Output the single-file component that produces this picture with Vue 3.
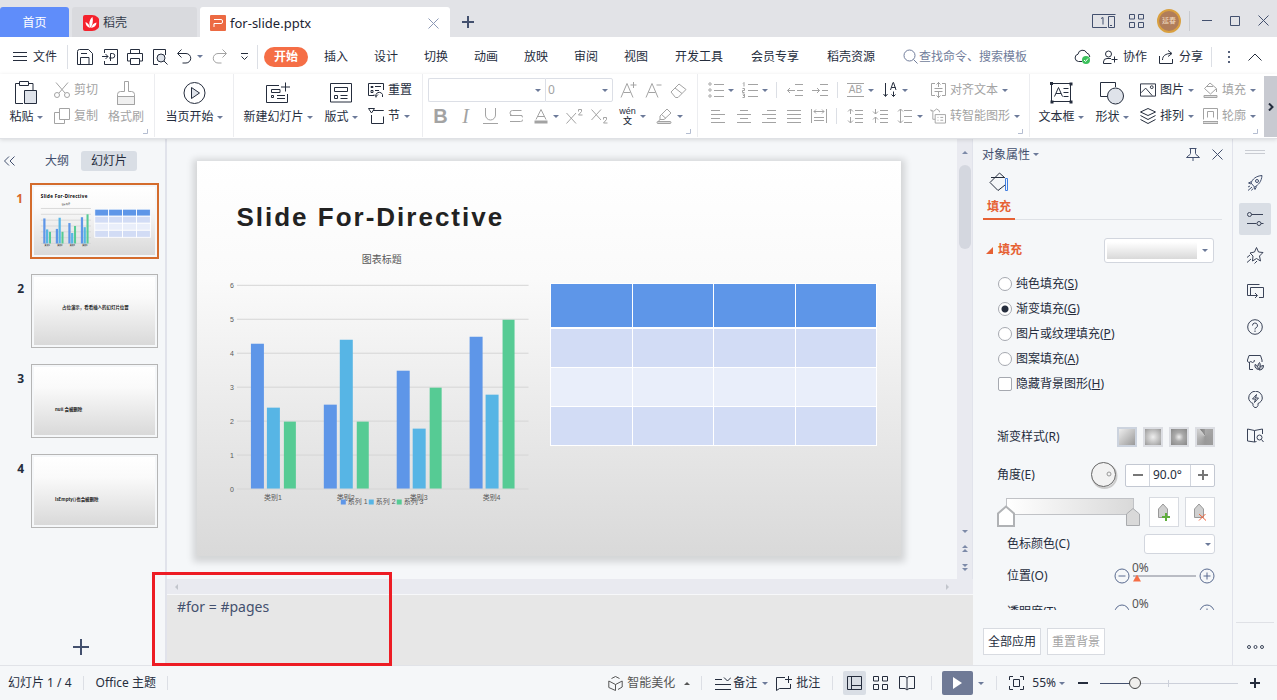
<script setup>
import { ref, h } from 'vue'

const glyphs = {
  save: [16, 16, '<path d="M.5 15.5V2.5a2 2 0 0 1 2-2h9l4 4v11z"/><path d="M3.500 15V8.500h8.500V15M4 4.500h6"/>'],
  exportPdf: [16, 16, '<path d="M2.500 4V.5h13v15h-13V12M0 7.500h6M3.500 5l2.500 2.500L3.500 10"/><path d="M8.500 12V4.500h2a2.200 2.200 0 0 1 0 4.500h-3.500"/>'],
  print: [16, 16, '<path d="M3.500 4V.5h9V4M3.500 12h-3V4.500h15V12h-3"/><path d="M3.500 9.500h9v6h-9z"/>'],
  preview: [16, 16, '<path d="M6 15.500H1.500V.5h12V6"/><circle cx="9" cy="9" r="4" fill="#dfe3ea"/><path d="M12 12l3.500 3.500"/>'],
  undo: [15, 15, '<path d="M4.500.5l-4 4 4 4M1 4.500h8a4.500 4.500 0 0 1 0 9.500H5.500"/>'],
  redo: [15, 15, '<path d="M10.500.5l4 4-4 4M14 4.500H6a4.500 4.500 0 0 0 0 9.500h3.500"/>'],
  more: [9, 8, '<path d="M1 .5h7M1.500 3.500l3 3 3-3"/>'],
  menu: [14, 9, '<path d="M0 .5h14M0 4.500h14M0 8.500h14"/>'],
  search: [15, 15, '<circle cx="6.500" cy="6.500" r="5.500"/><path d="M10.500 10.500l4 4"/>'],
  cloud: [17, 16, '<path d="M8 12.500H4.500a3.700 3.700 0 0 1-.5-7.300A4.600 4.600 0 0 1 12.800 4a4.300 4.300 0 0 1 3 4"/><circle cx="12" cy="11" r="4" fill="#3cc15c" stroke="none"/><path d="M10 11l1.500 1.500L14 9.500" stroke="#fff"/>'],
  person: [15, 14, '<circle cx="5.500" cy="4" r="3"/><path d="M8 8.500H4A3.500 3.500 0 0 0 .5 12v1.500h8M11.500 6.500v6M8.500 9.500h6"/>'],
  share: [15, 14, '<path d="M.5 6v7.500h13V9M3.500 10c0-4 3-6.500 8.500-6.500M9 .5l4 3-4 3"/>'],
  chevUp: [14, 8, '<path d="M.5 7.500l6.500-6.500 6.500 6.500"/>'],
  paste: [22, 24, '<path d="M8 22.500H.5v-20H4M14 2.500h4V9M4.500.5h9v4h-9z"/><path d="M9.500 9.500h12v13h-12z" fill="#dfe3ea"/>'],
  cut: [16, 16, '<circle cx="3" cy="13" r="2.500"/><circle cx="13" cy="13" r="2.500"/><path d="M5 11L14 .5M11 11L2 .5"/>'],
  copy: [16, 16, '<path d="M5.500.5h10v11h-10z"/><path d="M5.500 4.500h-5v11h10v-4"/>'],
  brush: [18, 24, '<path d="M7.500 10.500V.5h4v10h3a3 3 0 0 1 3 3v10H.5v-10a3 3 0 0 1 3-3z"/><path d="M.5 15.500h17v8H.5z" fill="#f0f0f0"/>'],
  playRound: [23, 24, '<circle cx="11.500" cy="12" r="10.500"/><path d="M8.500 6.500l8 5.500-8 5.500z" fill="#dfe3ea"/>'],
  newSlide: [24, 22, '<path d="M13 3.500H.5v17h21V12M19.500.5v9M15 5h9M5.500 7.500H14v3H5.500zM5.500 13.500h2v2h-2zM11 13.500h8M11 16.500h8"/>'],
  layout: [22, 20, '<path d="M.5.5h21v18.500H.5z"/><path d="M4.500 4.500h13v4h-13zM4.500 12.500h3v3h-3zM10.500 12.500h7M10.500 15.500h7"/>'],
  reset: [16, 16, '<path d="M6 13.500H.5V1.500h15V8M3 4.500h2v1H3zM7 4.500h6M3 8.500h2v2H3zM7 8.500h4M8 15.500v-3a3.500 3.500 0 0 1 6.500 0v2.500M6 12.500l2 2 2-2"/>'],
  section: [16, 16, '<path d="M5 2.500h10.500M3.500 7v8.500h12v-7M.5.500h6L3.500 5zM8 2.500h7.500"/>'],
  aPlus: [17, 16, '<path d="M1 15.500L7 1.500l6 14M3.500 10.500h7M13.500 0v6M10.500 3h6"/>'],
  aMinus: [17, 16, '<path d="M1 15.500L7 1.500l6 14M3.500 10.500h7M11.500 3h5"/>'],
  eraser: [17, 15, '<path d="M1 9l8-8 7 5.500-8 8H5.500z"/><path d="M5 5l7 5.500"/>'],
  list: [16, 16, '<circle cx="2" cy="2" r="1.200"/><circle cx="2" cy="8" r="1.200"/><circle cx="2" cy="14" r="1.200"/><path d="M6 2.500h10M6 8.500h10M6 14.500h10"/>'],
  numList: [16, 16, '<path d="M6 2.500h10M6 8.500h10M6 14.500h10M1 1.500l1-1v4M.5 6.500h2v2h-2v2h2M.5 12h2v3.500h-2M1 13.500h1.500"/>'],
  outdent: [16, 12, '<path d="M8 .5h8M10 6.500h6M8 11.500h8M.5 6.500H8M3 4L.5 6.500 3 9"/>'],
  indent: [16, 12, '<path d="M8 .5h8M10 6.500h6M8 11.500h8M0 6.500h7.500M5 4l2.500 2.500L5 9"/>'],
  alignL: [16, 13, '<path d="M0 .5h9M0 4.500h14M0 8.500h9M0 12.500h14"/>'],
  alignC: [16, 13, '<path d="M4 .5h8M1 4.500h14M4 8.500h8M1 12.500h14"/>'],
  alignR: [16, 13, '<path d="M6 .5h9M1 4.500h14M6 8.500h9M1 12.500h14"/>'],
  alignJ: [16, 13, '<path d="M1 .5h14M1 4.500h14M1 8.500h14M1 12.500h14"/>'],
  spread: [16, 14, '<path d="M.5 0v14M15.500 0v14M3 2.500h10M5 .5l-2 2 2 2M11 .5l2 2-2 2M3 8.500h10M3 11.500h10"/>'],
  lineUp: [16, 16, '<path d="M3.500 1v5M1 3.500L3.500 1 6 3.500M3.500 9v6M1 12.500L3.500 15 6 12.500M8 2.500h8M8 6.500h8M8 10.500h8M8 14.500h8"/>'],
  lineDown: [16, 16, '<path d="M3.500 1v5M1 3.500L3.500 6 6 3.500M3.500 9v6M1 11.500L3.500 9 6 11.500M8 2.500h8M8 6.500h8M8 10.500h8M8 14.500h8"/>'],
  spacing: [16, 16, '<path d="M3.500 1v14M1 3.500L3.500 1 6 3.500M1 12.500L3.500 15 6 12.500M7 2.500h8M7 8.500h8M7 14.500h8"/>'],
  alignText: [15, 16, '<path d="M4 1.500H.5v12H4M11 1.500h3.500v12H11M7.500 0v5M7.500 10v6M5.500 2.500l2-2 2 2M5.500 13.500l2 2 2-2M3.500 6.500h8M3.500 9.500h8"/>'],
  smart: [17, 16, '<path d="M3 11.500V4L.5 1.500 4 3l3-2.500 3 2V4M5.500 6.500h11v9h-11zM3 11.500h2.500M8 9.500h1M11 9.500h3M8 12.500h1M11 12.500h3"/>'],
  textbox: [23, 22, '<path d="M1.500 1.500h19v18h-19z"/><path d="M0 0h3v3H0zM19.500.5h3v3h-3zM.5 18.500h3v3h-3zM19.500 18.500h3v3h-3z" fill="currentColor" stroke="none"/><path d="M4.500 14.500l4-9 4 9M6 11.500h5M13.500 6.500h5M13.500 10.500h5M13.500 14.500h5"/>'],
  shapes: [24, 23, '<path d="M7 14.500H.5V.5h15V5"/><circle cx="15.500" cy="14" r="8" fill="#dfe3ea"/>'],
  picture: [17, 14, '<path d="M.5.5h16v13H.5z"/><circle cx="12.500" cy="4" r="1.500"/><path d="M1 10l5-5 7 8"/>'],
  layers: [16, 16, '<path d="M.5 4L8 .5 15.500 4 8 7.500zM.5 7.500L8 11.500l7.500-4M.5 11.500L8 15.500l7.500-4"/>'],
  bucket: [15, 16, '<path d="M1.500 6.500L7 1l6.500 5.500-6 5.500zM3 4.500h7M13.500 7v3"/><path d="M1 13.500h13v2H1z" fill="#ddd"/>'],
  outline: [15, 16, '<path d="M.5 11.500V.5h14v11M4.500 9.500v-6h6v6"/><path d="M0 13.500h15v2H0z" fill="#ddd"/>'],
  corner: [5, 5, '<path d="M4.500 0v4.500H0"/>'],
  win1: [24, 14, '<path d="M15 13.500H.5V.5h23M9 4.500l2-1v7M16.500 2.500h6v11h-6zM18 11.500h2"/>'],
  grid: [15, 14, '<path d="M.5.5h5v4.500h-5zM9.500.5h5v4.500h-5zM.5 8.500h5v5h-5zM9.500 8.500h5v5h-5z"/>'],
  close: [11, 11, '<path d="M.5.5l10 10M10.500.5l-10 10"/>'],
  min: [10, 2, '<path d="M0 .5h10"/>'],
  max: [10, 10, '<path d="M.5.5h9v9h-9z"/>'],
  plusBold: [12, 12, '<path d="M0 6h12M6 0v12" stroke-width="2"/>'],
  plusBig: [16, 16, '<path d="M0 8h16M8 0v16" stroke-width="2"/>'],
  plus: [10, 10, '<path d="M0 5h10M5 0v10" stroke-width="2"/>'],
  minus: [10, 10, '<path d="M0 5h10" stroke-width="2"/>'],
  collapse: [11, 10, '<path d="M5 .5L.5 5 5 9.500M10.500.5L6 5l4.500 4.500"/>'],
  pin: [14, 13, '<path d="M3.500.5h7M4.500 1v4.500C4 7.500 2.500 7 .5 9.500h13C11.500 7 10 7.500 9.500 5.500V1M7 10v3"/>'],
  fillTab: [20, 20, '<path d="M1 10.500l9.500-9.500L16 6M1 10.500l8 8L16 13M2 5.500h13"/><path d="M16.500 6.500h2v12h-2z" stroke="#3f7de0"/>'],
  rocket: [16, 16, '<path d="M4 8c1.500-4 5-7 11-7.500-.5 6-3.500 9.500-7.500 11.500z"/><circle cx="10" cy="6" r="1.500"/><path d="M4.500 6.500L1.500 8l2.500 1M9.500 11.500L8 14.500l-1-2.500M1 12l2-1M1 15.500L5 12M4.500 15.500L6 13.500"/>'],
  sliders: [17, 14, '<circle cx="2.500" cy="2.500" r="2"/><path d="M4.500 2.500H16M0 11.500h9.500M14 11.500h2.500"/><circle cx="12" cy="11.500" r="2"/>'],
  star: [17, 17, '<path d="M9.500.5l2 4.500 4.500.5-3.500 3.500 1 5-4-2.500-4 2.500.5-5L3 6l4.500-1zM0 10.500L3 8M0 15.500L4 12M7.500 16.500L10 14"/>'],
  screens: [17, 15, '<path d="M3.500 11.500h-3v-11h12M6 11.500H3.500v-8h13v10H12M3.500 4v8M4 11.500h6M8 9l2.500 2.500L8 14"/>'],
  help: [16, 16, '<circle cx="8" cy="8" r="7.300"/><path d="M5.500 6.500a2.500 2.500 0 1 1 3.500 2.300c-.8.4-1 .7-1 1.700M8 11.500v1.500"/>'],
  shop: [17, 16, '<path d="M2.500 7v7.500H6M.5 5L2 .5h11.500L15 5v2M.5 5v1.500q1.500 2 3.300 0 1.700 2 3.500 0V5"/><path d="M8 9.500c2 .5 3 2 3.500 5C9 14 7.500 12.500 8 9.500zM11 11c0-1.500.5-2.500 1.500-3.500 1 1.500 1 3 .5 4.500M12 15c.5-3 2-4.500 4.500-4.500 0 3-1.500 4.500-4.500 4.500z" fill="currentColor" fill-opacity=".3"/>'],
  bulb: [15, 17, '<path d="M5 12.500C2.500 11.500.7 9.500.7 7a6.800 6.800 0 0 1 13.600 0c0 2.500-1.800 4.500-4.300 5.500v2L8.500 16.500h-2L5 14.500z"/><path d="M8.500 3.500L4.500 8h3l-1 3.500 4-4.500h-3z"/>'],
  book: [17, 15, '<path d="M7.500 2.500L.5 1v12l7 1zM7.500 2.500L15.500 1v5M7.500 14l2-.5"/><circle cx="12.500" cy="9.500" r="2.500"/><path d="M14.500 11.500l2 2.500"/>'],
  dots: [17, 4, '<circle cx="2" cy="2" r="1.500"/><circle cx="8.500" cy="2" r="1.500"/><circle cx="15" cy="2" r="1.500"/>'],
  cube: [15, 15, '<path d="M3.500 2.500l4-2 4 2M.8 5l6.700 3.500L14.200 5M7.500 8.500v6M.8 5v6.500L7.500 14.500M14.200 5v6L10 13.500"/>'],
  notes: [16, 13, '<path d="M0 2.500h7M0 7.500h16M0 12.500h16M9 .5L12.500 4 16 .5"/>'],
  comment: [16, 15, '<path d="M9 1.500H.5v13l3-2h11V8M12.500 0v7M9 3.500h7"/>'],
  viewNormal: [15, 14, '<path d="M.5.5h14v13H.5zM4.500.5v13M4.500 9.500h10"/>'],
  viewRead: [16, 15, '<path d="M8 2.500L6.500.5h-6v12H6L8 14l2-1.500h5.500V.5h-6zM8 2.500V13"/>'],
  fit: [15, 14, '<path d="M.5 4V.5H4M11 .5h3.500V4M14.500 10v3.500H11M4 13.500H.5V10M4.500 3.500h6v7h-6z"/>'],
  wps: [16, 16, '<rect width="16" height="16" rx="1" fill="#ec6a43" stroke="none"/><path d="M4 12V8.500h7a1.500 1.500 0 0 0 1.500-1.500V6A1.500 1.500 0 0 0 11 4.500H4" stroke="#fff"/>'],
  docer: [16, 16, '<path d="M2 0h7a8 8 0 0 1 0 16H2a2 2 0 0 1-2-2V2a2 2 0 0 1 2-2z" fill="#f5222d" stroke="none"/><path d="M7.500 13C5 8 7 4 9.500 2c1 4 0 8-2 11zM7 13c-3-1-4.500-3-4.500-6C5 8 6.500 10 7 13zM8 13c1-3 2.500-5 5.500-5.500C13.500 10.500 11.500 12.500 8 13z" fill="#fff" stroke="none"/>'],
  underline: [15, 16, '<path d="M2.500 0v7a5 5 0 0 0 10 0V0M0 15.500h15"/>'],
  strike: [14, 14, '<path d="M12.500 1.500H3.500a2.500 2.500 0 0 0 0 5h8a3 3 0 0 1 0 6H1M1 6.500h12"/>'],
  fontColor: [14, 15, '<path d="M2 10.500l5-10 5 10M4 7.500h6"/><path d="M.5 13h13" stroke-width="3"/>'],
  sup: [17, 15, '<path d="M.5 4l9.500 10.500M10 4L.5 14.500M12.500 2.500V.5h3v2l-3 3.500h4"/>'],
  sub: [17, 15, '<path d="M.5.5L10 11M10 .5L.5 11M12.500 10.500v-2h3v2l-3 3.500h4"/>'],
  pen: [17, 16, '<path d="M3.500 11.500L2.500 14M4 8l7-7 4 4-7 6.500H4zM5.500 6.500l4.500 4"/><rect x="1" y="13.500" width="14" height="2" rx="1" fill="#ddd"/>'],
  sort: [14, 16, '<path d="M2.500 1v13M.5 12l2 2.500 2-2.500M7.500 8L10 .5h.5L13 8M8.500 5.500h4M10.500 9.500v5M8.500 12.500l2 2 2-2"/>'],
  stopAdd: [16, 18, '<path d="M2.500 6L7 1l4.500 5v8.500h-9z" fill="#d0d0d0" stroke="#999"/><path d="M6 14h8M10 10v8" stroke="#5fae3c" stroke-width="2"/>'],
  stopDel: [16, 18, '<path d="M2.500 6L7 1l4.500 5v8.500h-9z" fill="#d0d0d0" stroke="#999"/><path d="M7 11l7 6.500M13.500 11L7 17.500" stroke="#f0643c"/>'],
  stop: [18, 22, '<path d="M1 8.500L9 1.500l8 7V21H1z" stroke="#b0b2b5" stroke-width="2" fill="#fff"/>'],
  stopEnd: [14, 18, '<path d="M.5 6L7 .5 13.500 6v11.500H.5z" stroke="#a9abae" fill="#d9d9d9"/>'],
  circleMinus: [16, 16, '<circle cx="8" cy="8" r="7"/><path d="M4.500 8h7"/>'],
  circlePlus: [16, 16, '<circle cx="8" cy="8" r="7"/><path d="M4.500 8h7M8 4.500v7"/>'],
  dial: [28, 28, '<circle cx="14.500" cy="15" r="12" stroke="#ccc" stroke-width="2"/><circle cx="13.500" cy="13.500" r="12" fill="#f2f2f2" stroke="#666"/><circle cx="19" cy="13" r="2" stroke="#999"/>'],
  arrowRight: [6, 8, '<path d="M1 .5L4.500 4 1 7.500" stroke-width="2"/>'],
}

const Ico = (props) => {
  const [w, ht, body] = glyphs[props.name]
  return h('svg', { width: w, height: ht, viewBox: `0 0 ${w} ${ht}`, fill: 'none', stroke: 'currentColor', 'aria-hidden': 'true', innerHTML: body })
}
Ico.props = ['name']

const tabs = ['开始', '插入', '设计', '切换', '动画', '放映', '审阅', '视图', '开发工具', '会员专享', '稻壳资源']
const series = [
  { name: '系列 1', color: '#5e96e8', x: 54, w: 13, values: [4.3, 2.5, 3.5, 4.5] },
  { name: '系列 2', color: '#57b5e5', x: 70, w: 13, values: [2.4, 4.4, 1.8, 2.8] },
  { name: '系列 3', color: '#56cb94', x: 87, w: 12, values: [2, 2, 3, 5] },
]
const unit = 34
const yOf = (v) => Math.round(329 - v * unit)
const slides = [
  { n: 2, text: '占位演示，看看插入的幻灯片位置', x: 163, y: 187 },
  { n: 3, text: 'null 会被删除', x: 122, y: 256 },
  { n: 4, text: 'IsEmpty()也会被删除', x: 122, y: 256 },
]
const fills = [['纯色填充', 'S'], ['渐变填充', 'G'], ['图片或纹理填充', 'P'], ['图案填充', 'A']]
const fill = ref('G')
const side = ['rocket', 'sliders', 'star', 'screens', 'help', 'shop', 'bulb', 'book']
const angle = ref('90.0°')
const notes = ref('#for = #pages')
const zoom = ref(23)
</script>

<template>
  <div class="app">
    <header class="titlebar">
      <button class="tab home">首页</button>
      <button class="tab docer"><Ico name="docer" />稻壳</button>
      <div class="tab file"><Ico name="wps" /><span>for-slide.pptx</span><button class="plain x" aria-label="关闭"><Ico name="close" /></button></div>
      <button class="plain newtab" aria-label="新建"><Ico name="plusBold" /></button>
      <div class="wincontrols">
        <button class="plain" aria-label="窗口"><Ico name="win1" /></button>
        <button class="plain" aria-label="应用"><Ico name="grid" /></button>
        <span class="avatar">延春</span>
        <i class="vline"></i>
        <button class="plain" aria-label="最小化"><Ico name="min" /></button>
        <button class="plain" aria-label="最大化"><Ico name="max" /></button>
        <button class="plain" aria-label="关闭"><Ico name="close" /></button>
      </div>
    </header>

    <nav class="menubar">
      <button class="plain filebtn"><Ico name="menu" />文件</button>
      <i class="vline"></i>
      <div class="quick">
        <button v-for="n in ['save', 'exportPdf', 'print', 'preview']" :key="n" class="plain q" :aria-label="n"><Ico :name="n" /></button>
        <button class="plain q wide" aria-label="撤销"><Ico name="undo" /><i class="caret"></i></button>
        <button class="plain q off" aria-label="恢复"><Ico name="redo" /></button>
        <button class="plain q" aria-label="更多"><Ico name="more" /></button>
      </div>
      <i class="vline"></i>
      <div class="tabs">
        <button v-for="(t, i) in tabs" :key="t" class="plain mtab" :class="{ on: i === 0, long: t.length > 2 }"><span>{{ t }}</span></button>
      </div>
      <button class="plain search"><Ico name="search" />查找命令、搜索模板</button>
      <div class="menuright">
        <button class="plain" aria-label="云同步"><Ico name="cloud" /></button>
        <button class="plain"><Ico name="person" />协作</button>
        <button class="plain"><Ico name="share" />分享</button>
        <i class="vline"></i>
        <button class="plain vdots" aria-label="更多"><i></i><i></i><i></i></button>
        <button class="plain" aria-label="收起"><Ico name="chevUp" /></button>
      </div>
    </nav>

    <section class="ribbon">
      <div class="group g1">
        <button class="plain big w40"><span class="bi"><Ico name="paste" /></span><span>粘贴<i class="caret"></i></span></button>
        <div class="col off">
          <button class="plain small"><Ico name="cut" />剪切</button>
          <button class="plain small"><Ico name="copy" />复制</button>
        </div>
        <button class="plain big w56 off"><span class="bi"><Ico name="brush" /></span><span>格式刷</span></button>
        <Ico name="corner" class="corner" />
      </div>
      <div class="group g2">
        <button class="plain big w78"><span class="bi"><Ico name="playRound" /></span><span>当页开始<i class="caret"></i></span></button>
      </div>
      <div class="group g3">
        <button class="plain big w88"><span class="bi"><Ico name="newSlide" /></span><span>新建幻灯片<i class="caret"></i></span></button>
        <button class="plain big w38"><span class="bi"><Ico name="layout" /></span><span>版式<i class="caret"></i></span></button>
        <div class="col">
          <button class="plain small"><Ico name="reset" />重置</button>
          <button class="plain small"><Ico name="section" />节<i class="caret"></i></button>
        </div>
      </div>
      <div class="group g4 off">
        <div class="rows">
          <div class="row">
            <label class="combo font"><select aria-label="字体"><option></option></select><i class="caret"></i></label>
            <label class="combo size"><select aria-label="字号"><option>0</option></select><i class="caret"></i></label>
            <button class="plain ib first" aria-label="增大字号"><Ico name="aPlus" /></button>
            <button class="plain ib" aria-label="减小字号"><Ico name="aMinus" /></button>
            <button class="plain ib" aria-label="清除格式"><Ico name="eraser" /></button>
          </div>
          <div class="row">
            <button class="plain ib bold">B</button>
            <button class="plain ib ital">I</button>
            <button class="plain ib" aria-label="下划线"><Ico name="underline" /></button>
            <button class="plain ib" aria-label="删除线"><Ico name="strike" /></button>
            <button class="plain ic" aria-label="字体颜色"><span><Ico name="fontColor" /></span><i class="caret"></i></button>
            <button class="plain ib" aria-label="上标"><Ico name="sup" /></button>
            <button class="plain ib" aria-label="下标"><Ico name="sub" /></button>
            <button class="plain ic dark gap4"><span class="wen"><b class="py">wén</b><b class="hz">文</b></span><i class="caret"></i></button>
            <button class="plain ic gap4" aria-label="突出显示"><span><Ico name="pen" /></span><i class="caret"></i></button>
          </div>
        </div>
        <Ico name="corner" class="corner" />
      </div>
      <div class="group g5 off">
        <div class="rows">
          <div class="row">
            <button class="plain ic" aria-label="项目符号"><span><Ico name="list" /></span><i class="caret"></i></button>
            <button class="plain ic" aria-label="编号"><span><Ico name="numList" /></span><i class="caret"></i></button>
            <i class="vline"></i>
            <button class="plain ib" aria-label="减少缩进"><Ico name="outdent" /></button>
            <button class="plain ib" aria-label="增加缩进"><Ico name="indent" /></button>
            <i class="vline"></i>
            <button class="plain ic"><span class="ab">AB</span><i class="caret"></i></button>
            <button class="plain ic dark" aria-label="文字方向"><span><Ico name="sort" /></span><i class="caret"></i></button>
            <button class="plain small push"><Ico name="alignText" />对齐文本<i class="caret"></i></button>
          </div>
          <div class="row r2">
            <button v-for="n in ['alignL', 'alignC', 'alignR', 'alignJ', 'spread']" :key="n" class="plain ib" :aria-label="n"><Ico :name="n" /></button>
            <i class="vline"></i>
            <button class="plain ib" aria-label="增大段距"><Ico name="lineUp" /></button>
            <button class="plain ib" aria-label="减小段距"><Ico name="lineDown" /></button>
            <button class="plain ic" aria-label="行距"><span><Ico name="spacing" /></span><i class="caret"></i></button>
            <button class="plain small near"><Ico name="smart" />转智能图形<i class="caret"></i></button>
          </div>
        </div>
        <Ico name="corner" class="corner" />
      </div>
      <div class="group g6">
        <button class="plain big w62"><span class="bi"><Ico name="textbox" /></span><span>文本框<i class="caret"></i></span></button>
        <button class="plain big w40"><span class="bi"><Ico name="shapes" /></span><span>形状<i class="caret"></i></span></button>
        <div class="col">
          <button class="plain small"><Ico name="picture" />图片<i class="caret"></i></button>
          <button class="plain small"><Ico name="layers" />排列<i class="caret"></i></button>
        </div>
        <div class="col off">
          <button class="plain small"><Ico name="bucket" />填充<i class="caret"></i></button>
          <button class="plain small"><Ico name="outline" />轮廓<i class="caret"></i></button>
        </div>
        <Ico name="corner" class="corner" />
      </div>
      <button class="plain ribmore" aria-label="更多功能"><Ico name="arrowRight" /></button>
    </section>

    <main class="main">
      <aside class="slides">
        <div class="slidetabs">
          <button class="plain coll" aria-label="收起"><Ico name="collapse" /></button>
          <button class="plain">大纲</button>
          <button class="plain on">幻灯片</button>
        </div>
        <ol class="thumbs">
          <li>
            <b class="num on">1</b>
            <div class="thumb on">
              <svg class="paper" viewBox="0 0 705 396" role="img" aria-label="Slide For-Directive">
                <text x="40" y="64" class="ttl">Slide For-Directive</text>
                <text x="186" y="104" class="cap">图表标题</text>
                <path v-for="i in 7" :key="i" :d="`M40 ${yOf(i - 1)}H332`" stroke="#d6d6d6" stroke-width="5" />
                <g v-for="s in series" :key="s.name" :fill="s.color">
                  <rect v-for="(v, i) in s.values" :key="i" :x="s.x + i * 73" :y="yOf(v)" :width="s.w" :height="v * unit" />
                </g>
                <text v-for="i in 4" :key="'c' + i" :x="4 + i * 73" y="342" class="cap">类别{{ i }}</text>
                <g stroke="#fff" stroke-width="5">
                  <template v-for="r in 4" :key="r">
                    <rect v-for="c in 4" :key="c" :x="273 + c * 81" :y="88 + r * 41" width="81" height="41" :fill="r === 1 ? '#5e96e8' : r === 3 ? '#e9eefa' : '#d2dcf5'" />
                  </template>
                </g>
              </svg>
            </div>
          </li>
          <li v-for="s in slides" :key="s.n">
            <b class="num">{{ s.n }}</b>
            <div class="thumb">
              <svg class="paper" viewBox="0 0 705 396"><text :x="s.x" :y="s.y" class="mini">{{ s.text }}</text></svg>
            </div>
          </li>
        </ol>
        <button class="plain add" aria-label="新建幻灯片"><Ico name="plusBig" /></button>
      </aside>

      <section class="center">
        <div class="stage">
          <div class="canvas">
            <article class="slide">
              <svg class="chart" viewBox="0 0 705 396" role="img" aria-label="图表标题">
                <text x="185" y="102" class="charttitle">图表标题</text>
                <path v-for="i in 7" :key="i" :d="`M40 ${yOf(i - 1) - 0.5}H332`" stroke="#d6d6d6" />
                <text v-for="i in 7" :key="'n' + i" x="37" :y="yOf(i - 1) + 2" class="axis">{{ i - 1 }}</text>
                <g v-for="s in series" :key="s.name" :fill="s.color">
                  <rect v-for="(v, i) in s.values" :key="i" :x="s.x + i * 73" :y="yOf(v)" :width="s.w" :height="328 - yOf(v)" />
                </g>
                <text v-for="i in 4" :key="'c' + i" :x="3 + i * 73" y="339" class="cat">类别{{ i }}</text>
                <g v-for="(s, i) in series" :key="'l' + i">
                  <rect :x="144 + i * 28" y="339" width="5" height="5" :fill="s.color" />
                  <text :x="151 + i * 28" y="344" class="leg">{{ s.name }}</text>
                </g>
              </svg>
              <h1>Slide For-Directive</h1>
              <table>
                <tbody><tr v-for="r in 4" :key="r"><td v-for="c in 4" :key="c"></td></tr></tbody>
              </table>
            </article>
          </div>
          <div class="vscroll">
            <i class="tri up"></i><i class="thumbbar"></i><i class="tri push"></i>
            <span class="dbl"><i class="tri up"></i><i class="tri up"></i></span>
            <span class="dbl"><i class="tri"></i><i class="tri"></i></span>
          </div>
        </div>
        <div class="hscroll"><i class="tri left"></i><i class="tri right"></i></div>
        <textarea v-model="notes" class="notes" aria-label="备注" spellcheck="false"></textarea>
      </section>

      <aside class="props">
        <div class="phead"><button class="plain">对象属性<i class="caret"></i></button><button class="plain pin" aria-label="固定"><Ico name="pin" /></button><button class="plain" aria-label="关闭"><Ico name="close" /></button></div>
        <div class="ptabs"><button class="plain ptab"><Ico name="fillTab" /><span>填充</span></button></div>
        <div class="pbody">
          <div class="prow fillrow"><i class="fold"></i><b>填充</b><label class="pick swatch"><select aria-label="填充"><option></option></select><i class="caret"></i></label></div>
          <fieldset class="radios">
            <label v-for="f in fills" :key="f[1]"><input v-model="fill" type="radio" name="fill" :value="f[1]" />{{ f[0] }}(<u>{{ f[1] }}</u>)</label>
            <label><input type="checkbox" />隐藏背景图形(<u>H</u>)</label>
          </fieldset>
          <div class="prow styles"><span>渐变样式(R)</span><div class="swatches"><button class="s1" aria-label="线性"></button><button class="s2" aria-label="射线"></button><button class="s3" aria-label="矩形"></button><button class="s4" aria-label="路径"></button></div></div>
          <div class="prow angle"><label for="angle">角度(E)</label><Ico name="dial" class="dial" />
            <div class="spin"><button aria-label="减"><Ico name="minus" /></button><input id="angle" v-model="angle" /><button aria-label="加"><Ico name="plus" /></button></div>
          </div>
          <div class="prow stops">
            <div class="track"><i class="grad"></i><Ico name="stop" class="st a" /><Ico name="stopEnd" class="st b" /></div>
            <button class="sq" aria-label="增加光圈"><Ico name="stopAdd" /></button><button class="sq" aria-label="删除光圈"><Ico name="stopDel" /></button>
          </div>
          <div class="prow sub color"><label for="stopc">色标颜色(C)</label><span class="pick c"><select id="stopc"><option></option></select><i class="caret"></i></span></div>
          <div v-for="p in ['位置(O)', '透明度(T)']" :key="p" class="prow sub range">
            <label :for="p">{{ p }}</label>
            <button class="plain" aria-label="减"><Ico name="circleMinus" /></button>
            <span class="rng"><em>0%</em><input :id="p" type="range" value="0" /></span>
            <button class="plain" aria-label="加"><Ico name="circlePlus" /></button>
          </div>
        </div>
        <div class="pfoot"><button>全部应用</button><button disabled>重置背景</button></div>
      </aside>

      <nav class="side">
        <i class="grip"></i>
        <button v-for="n in side" :key="n" class="plain" :class="[n, { on: n === 'sliders' }]" :aria-label="n"><Ico :name="n" /></button>
        <button class="plain last" aria-label="更多"><Ico name="dots" /></button>
      </nav>
    </main>

    <footer class="status">
      <span>幻灯片 1 / 4</span><i class="vline"></i><span>Office 主题</span><i class="vline"></i>
      <div class="sright">
        <button class="plain beauty"><Ico name="cube" />智能美化<i class="caret upc"></i></button>
        <i class="vline"></i>
        <button class="plain note"><Ico name="notes" />备注<i class="caret"></i></button>
        <button class="plain cmt"><Ico name="comment" />批注</button>
        <i class="vline"></i>
        <div class="views">
          <button class="plain on" aria-label="普通视图"><Ico name="viewNormal" /></button>
          <button class="plain" aria-label="浏览视图"><Ico name="grid" /></button>
          <button class="plain" aria-label="阅读视图"><Ico name="viewRead" /></button>
        </div>
        <i class="vline"></i>
        <button class="play" aria-label="放映"><i></i></button>
        <i class="caret pc"></i>
        <i class="vline"></i>
        <button class="plain fitb" aria-label="适应窗口"><Ico name="fit" /></button>
        <button class="plain pct">55%<i class="caret"></i></button>
        <button class="plain" aria-label="缩小"><Ico name="minus" /></button>
        <span class="zoomwrap"><input v-model="zoom" type="range" aria-label="缩放" class="zoom" /></span>
        <button class="plain" aria-label="放大"><Ico name="plus" /></button>
      </div>
    </footer>
    <div class="marker"></div>
  </div>
</template>

<style>
body { background: #f5f7f9; }
*, *::before, *::after { box-sizing: border-box; }
</style>

<style scoped>
.app { position: relative; height: 100vh; min-height: 600px; display: flex; flex-direction: column; overflow: hidden; font: 12px/16px "Noto Sans", "Noto Sans CJK SC", sans-serif; color: #252d3d; white-space: nowrap; }
svg { display: block; flex: none; }
button, input, select, textarea { font: inherit; color: inherit; margin: 0; padding: 0; }
select, input { appearance: none; border: 0; background: transparent; outline: 0; }
.plain { border: 0; background: transparent; display: flex; align-items: center; white-space: nowrap; }
.caret { display: inline-block; flex: none; width: 0; height: 0; border: 3px solid transparent; border-top-color: #6c7a99; border-bottom: 0; }
.caret.upc { border-top: 0; border-bottom: 3px solid #555; }
.vline { flex: none; width: 1px; height: 16px; background: #dcdfe5; }
.off { color: #a3a3a3; }
.dark { color: #252d3d; }

.titlebar { flex: none; height: 37px; background: #e2e3e7; display: flex; align-items: flex-end; color: #43506e; }
.tab { height: 30px; border: 0; border-radius: 3px 3px 0 0; display: flex; align-items: center; padding-top: 2px; }
.home { width: 69px; justify-content: center; background: #5f8dfa; color: #fff; }
.tab.docer { width: 125px; margin-left: 3px; padding-left: 11px; gap: 4px; background: #d9dade; color: #333b4a; }
.file { width: 250px; margin-left: 3px; padding: 2px 11px 0 10px; gap: 4px; background: #fff; color: #1c2433; font-size: 13px; }
.x { margin-left: auto; color: #8b98b5; }
.newtab { height: 30px; margin-left: 12px; }
.wincontrols { flex: 1; height: 33px; display: flex; align-items: center; justify-content: flex-end; gap: 18px; padding-right: 8px; }
.wincontrols > * { flex: none; }
.wincontrols > :nth-child(2), .wincontrols > :nth-child(3) { margin-left: -5px; }
.wincontrols > :nth-child(4) { margin: 0 -6px 0 -10px; height: 20px; background: #c9cbd0; }
.avatar { width: 24px; height: 24px; border-radius: 50%; border: 2px solid #d9a040; background: #b07d5a; color: #f3dfc4; font-size: 7px; line-height: 20px; text-align: center; }

.menubar { flex: none; height: 37px; padding-top: 2px; background: #fff; display: flex; align-items: center; }
.filebtn { margin-left: 13px; gap: 6px; }
.filebtn + .vline { margin-left: 10px; height: 24px; }
.quick { display: flex; align-items: center; margin-left: 4px; }
.q { width: 25px; height: 26px; justify-content: center; }
.q.wide { width: 35px; gap: 5px; }
.quick + .vline { height: 24px; }
.tabs { display: flex; margin-left: 3px; }
.mtab { width: 50px; height: 22px; justify-content: center; }
.mtab.long { width: 76px; }
.mtab.on span { background: #f56e46; color: #fff; font-weight: 700; border-radius: 10px; padding: 2px 10px; }
.search { margin-left: 14px; gap: 1px; color: #717d9b; }
.menuright { flex: 1; display: flex; align-items: center; justify-content: flex-end; gap: 12px; padding-right: 15px; }
.menuright .plain { gap: 5px; }
.menuright .vline { height: 20px; margin-left: -4px; }
.menuright .vdots { flex-direction: column; gap: 3px; margin: 0 6px 0 4px; }
.vdots i { width: 2px; height: 2px; background: #56617a; }

.ribbon { flex: none; height: 65px; background: #fff; border-bottom: 1px solid #dfe1e5; display: flex; position: relative; z-index: 1; box-shadow: 0 1px 4px rgba(0, 0, 0, .12); }
.group { flex: none; height: 63px; display: flex; border-right: 1px solid #ecedf0; padding-top: 3px; position: relative; }
.g1 { padding-left: 6px; }
.g1 .col { margin-left: 8px; width: 44px; }
.g3 .col { margin-left: 8px; width: 54px; }
.g4 { width: 275px; padding-left: 5px; }
.g5 { width: 332px; padding-left: 5px; }
.g6 { flex: 1 0 234px; border-right: 0; }
.g6 .col { margin-left: 8px; width: 55px; }
.big { flex: none; height: 52px; flex-direction: column; padding-top: 4px; gap: 4px; }
.big > span:last-child { display: flex; align-items: center; gap: 3px; }
.bi { height: 24px; display: flex; align-items: center; }
.w38 { width: 38px; } .w40 { width: 40px; } .w56 { width: 56px; } .w62 { width: 62px; } .w78 { width: 78px; } .w88 { width: 88px; }
.small { height: 26px; gap: 4px; }
.small svg { max-width: 16px; }
.corner { position: absolute; right: 6px; bottom: 3px; color: #b4bdd0; }
.row { display: flex; align-items: center; height: 26px; }
.r2 { padding-left: 3px; }
.combo { height: 24px; border: 1px solid #dcdfe6; display: flex; align-items: center; padding: 0 4px 0 2px; }
.combo select { flex: 1; min-width: 0; height: 22px; }
.font { width: 117px; border-radius: 2px 0 0 2px; border-right: 0; }
.size { width: 68px; border-radius: 0 2px 2px 0; }
.ib { width: 25px; height: 24px; justify-content: center; }
.first { margin-left: 3px; }
.bold { font: 700 20px/24px "Liberation Sans", sans-serif; }
.ital { font: italic 20px/24px "Liberation Serif", serif; }
.ic { width: 34px; height: 24px; }
.ic > span { width: 25px; display: flex; justify-content: center; }
.gap4 { margin-left: 3px; }
.ic > .wen { flex-direction: column; align-items: center; }
.wen b { font-weight: 500; }
.py { font: 9px/10px "Liberation Sans", sans-serif; }
.hz { font: 9px/10px "Noto Sans CJK SC", sans-serif; }
.ic > .ab { width: 17px; margin: 0 4px; font: 10px/10px "Liberation Sans", sans-serif; border: solid; border-width: 1px 0; padding: 1px 0; }
.g5 .vline { margin: 0 5px; }
.push.small { margin-left: 20px; }
.near { margin-left: 4px; }
.ribmore { flex: none; width: 13px; height: 61px; margin-top: 2px; background: #c8cad1; justify-content: center; }

.main { flex: 1; min-height: 0; display: flex; background: #f5f7f9; }
.slides { flex: none; width: 167px; border-right: 2px solid #e1e3eb; display: flex; flex-direction: column; }
.slidetabs { display: flex; align-items: center; height: 20px; margin: 12px 0; padding-left: 4px; color: #43506e; }
.slidetabs .plain { height: 20px; }
.coll { margin-right: 30px; }
.slidetabs .on { width: 56px; margin-left: 12px; justify-content: center; background: #d9dee5; border-radius: 3px; color: #252d3d; }
.thumbs { list-style: none; margin: 0; padding: 0 6px 0 0; }
.thumbs li { display: flex; height: 90px; justify-content: flex-end; }
.num { font: 700 12px/16px "Noto Sans", sans-serif; margin: 8px 7px 0 0; }
.num.on { color: #d9662b; }
.thumb { width: 127px; height: 74px; margin: 1px 1px 0 0; border: 1px solid #b5b5b5; padding: 2px; }
.thumb.on { width: 129px; height: 76px; margin: 0; border: 2px solid #d46c2d; }
.paper { display: block; width: 100%; height: 68px; background: linear-gradient(#fff 0%, #fafafa 30%, #d9d9d9 100%); }
.mini { font: 700 26px "Noto Sans CJK SC", sans-serif; fill: #222; }
.ttl { font: 700 26px "Noto Sans", sans-serif; letter-spacing: 2px; }
.cap { font: 12px "Noto Sans CJK SC", sans-serif; text-anchor: middle; }
.add { margin: auto auto 10px 73px; color: #43506e; }

.center { flex: 1; min-width: 0; display: flex; flex-direction: column; }
.stage { flex: 1; min-height: 0; display: flex; }
.canvas { flex: 1; padding: 22px 56px 18px 30px; overflow: hidden; }
.slide { position: relative; aspect-ratio: 705 / 396; background: linear-gradient(#fff 0%, #fafafa 30%, #d9d9d9 100%); box-shadow: 0 2px 7px 4px rgba(0, 0, 0, .14); }
.slide h1 { position: absolute; left: 5.6%; top: 10%; margin: 0; font: 700 26px/32px "Liberation Sans", Arial, sans-serif; letter-spacing: 2px; color: #222; }
.chart { width: 100%; height: 100%; }
.chart text { fill: #595959; font-family: "Liberation Sans", "Noto Sans CJK SC", sans-serif; }
.charttitle { font-size: 10px; text-anchor: middle; }
.axis { font-size: 7px; text-anchor: end; }
.cat, .leg { font-size: 7px; }
.cat { text-anchor: middle; }
.slide table { position: absolute; left: 50.2%; top: 30.8%; width: 46.4%; height: 41.2%; border-collapse: collapse; table-layout: fixed; }
.slide td { border: 1px solid #fff; background: #d2dcf5; padding: 0; height: 39px; }
.slide tr:first-child td { background: #5e96e8; height: 45px; border-bottom-width: 2px; }
.slide tr:nth-child(3) td { background: #e9eefa; }
.vscroll { width: 16px; background: #e9eaf0; border-right: 1px solid #e1e3eb; display: flex; flex-direction: column; align-items: center; padding: 12px 0 8px; }
.tri { width: 0; height: 0; border: 3px solid transparent; border-top-color: #7d8aa8; border-bottom: 0; }
.tri.up { border-top: 0; border-bottom: 3px solid #7d8aa8; }
.thumbbar { width: 12px; height: 84px; margin-top: 11px; border-radius: 6px; background: #d4d7df; }
.tri.push { margin-top: auto; }
.dbl { display: flex; flex-direction: column; gap: 1px; margin-top: 12px; }
.hscroll { height: 15px; background: #e9eaf0; display: flex; justify-content: space-between; align-items: center; padding: 0 24px 0 8px; }
.tri.left { border: 3px solid transparent; border-right-color: #c2c5cc; border-left: 0; }
.tri.right { border: 3px solid transparent; border-left-color: #c2c5cc; border-right: 0; }
.notes { display: block; height: 71px; resize: none; border: 0; border-top: 1px solid #f7f8fa; outline: 0; background: #e7e7e7; color: #43506e; font-size: 14px; line-height: 18px; padding: 3px 10px; }

.props { flex: none; width: 260px; border-right: 1px solid #e1e3eb; display: flex; flex-direction: column; padding: 6px 0 0 9px; }
.phead { display: flex; align-items: center; height: 19px; padding-right: 9px; color: #43506e; }
.phead .plain { gap: 3px; }
.phead .pin { margin: 0 12px 0 auto; }
.ptabs { margin: 8px 10px 0 1px; border-bottom: 1px solid #dee1e6; display: flex; height: 48px; }
.ptab { height: 48px; width: 32px; flex-direction: column; border-bottom: 2px solid #e66134; }
.ptab span { color: #e66134; font-weight: 700; margin-top: 7px; }
.pbody { flex: 1; min-height: 0; overflow: hidden; }
.prow { display: flex; align-items: center; padding-left: 15px; }
.fillrow { height: 26px; margin-top: 17px; padding: 0 18px 0 4px; gap: 5px; color: #e66134; }
.fold { border-left: 7px solid transparent; border-bottom: 7px solid #e66134; }
.pick { margin-left: auto; display: flex; align-items: center; border: 1px solid #d2d6de; border-radius: 3px; background: #fff; }
.pick select { flex: 1; min-width: 0; }
.swatch { width: 110px; height: 25px; padding: 3px 5px 3px 2px; gap: 5px; }
.swatch select { height: 17px; background: linear-gradient(#fff, #d9d9d9); }
.radios { border: 0; margin: 8px 0 0; padding: 0 0 0 16px; display: flex; flex-direction: column; }
.radios label { display: flex; align-items: center; height: 25px; }
.radios input { width: 14px; height: 14px; border: 1px solid #a6a9b0; border-radius: 50%; margin-right: 4px; background: #fff; }
.radios input[type=checkbox] { border-radius: 2px; }
.radios input[type=radio]:checked { background: radial-gradient(circle, #252d3d 3px, #fff 4px); }
.styles { height: 22px; margin-top: 30px; padding-right: 17px; }
.swatches { margin-left: auto; display: flex; gap: 6px; }
.swatches button { width: 20px; height: 20px; border: 2px solid #dcdee3; }
.swatches .s1 { background: linear-gradient(135deg, #eee, #999); border-color: #ccd3de; }
.s2 { background: radial-gradient(#eee, #999); }
.s3 { background: radial-gradient(#eee, #aaa 40%, #888); }
.s4 { background: conic-gradient(from 0deg at 50% 40%, #aaa, #a0a0a0 25%, #999 50%, #c4c4c4 80%, #d0d0d0 88%, #888 90%, #999); }
.angle { height: 28px; margin-top: 13px; padding-right: 17px; }
.dial { margin-left: auto; }
.spin { width: 90px; height: 23px; margin-left: 7px; display: flex; background: #fff; border: 1px solid #c3c8d2; border-radius: 2px; color: #252d3d; }
.spin button { width: 23px; border: 0; background: transparent; display: grid; place-items: center; color: #777; }
.spin input { flex: 1; min-width: 0; border: solid #d2d6de; border-width: 0 1px; padding-left: 3px; }
.stops { height: 30px; margin-top: 8px; padding-right: 17px; gap: 6px; }
.track { position: relative; flex: 1; height: 30px; margin: 0 3px 0 0; }
.grad { position: absolute; left: 9px; right: 6px; top: 1px; height: 17px; border: 1px solid #c0c2c6; background: linear-gradient(90deg, #fff, #d9d9d9); }
.st { position: absolute; }
.st.a { left: 0; bottom: 0; }
.st.b { right: 0; bottom: 1px; }
.sq { width: 30px; height: 30px; border: 1px solid #d8dbe1; background: #fff; display: grid; place-items: center; }
.sub { padding-left: 25px; padding-right: 17px; }
.color { height: 20px; margin-top: 7px; }
.pick.c { width: 71px; height: 20px; padding-right: 3px; }
.range { height: 36px; gap: 3px; padding-top: 7px; color: #5a6b90; }
.range label { flex: 1; color: #252d3d; }
.rng { position: relative; width: 63px; height: 16px; color: #555; }
.rng em { position: absolute; left: -1px; top: -8px; font-style: normal; }
.rng input { display: block; width: 63px; height: 16px; background: linear-gradient(#b9bcc4, #b9bcc4) 0 7px / 100% 2px no-repeat; }
.rng input::-webkit-slider-thumb { appearance: none; width: 8px; height: 7px; margin-top: 5px; background: #f56e46; clip-path: polygon(50% 0, 100% 100%, 0 100%); }
.pfoot { flex: none; display: flex; gap: 6px; padding: 18px 0 10px 1px; }
.pfoot button { width: 58px; height: 27px; border: 1px solid #d8dbe1; background: #fff; }
.pfoot button:disabled { color: #a3a3a3; }

.side { flex: none; width: 44px; display: flex; flex-direction: column; align-items: center; color: #3a4358; }
.side .plain { width: 32px; height: 32px; margin-bottom: 4px; justify-content: center; border-radius: 2px; }
.side .on { background: #d9dee5; }
.rocket { color: #43506e; }
.grip { width: 20px; height: 4px; margin: 11px 0 13px; border: solid #c9ccd2; border-width: 1px 0; }
.side .last { width: 38px; margin: auto 0 0; border-top: 1px solid #dfe1e6; height: 43px; padding-top: 6px; border-radius: 0; }

.status { flex: none; height: 35px; border-top: 1px solid #e1e3e8; background: #f5f7f9; display: flex; align-items: center; padding: 0 17px 0 8px; }
.status .vline { height: 14px; }
.status > .vline { margin: 0 12px 0 11px; }
.sright { flex: 1; display: flex; align-items: center; justify-content: flex-end; }
.beauty { color: #555; gap: 4px; }
.beauty .caret { margin: 0 11px 0 5px; }
.note { margin-left: 13px; gap: 2px; }
.note .caret { margin: 0 8px 0 3px; }
.cmt { gap: 4px; margin-right: 12px; }
.views { display: flex; margin: 0 13px 0 10px; gap: 3px; }
.views button { width: 23px; height: 24px; justify-content: center; border-radius: 2px; }
.views .on { background: #d9dee5; }
.play { width: 31px; height: 24px; margin-left: 10px; border: 0; border-radius: 2px; background: #6f7a96; display: grid; place-items: center; }
.play i { border: 6px solid transparent; border-left: 9px solid #fff; border-right: 0; }
.pc { margin: 0 12px 0 5px; }
.fitb { margin: 0 8px 0 12px; }
.pct { gap: 3px; margin-right: 13px; }
.zoomwrap { margin: 0 12px; }
.zoom { display: block; width: 138px; height: 14px; background: linear-gradient(#43506e, #43506e) 0 7px / 30px 1px no-repeat, linear-gradient(#ccd0da, #ccd0da) 68px 4px / 1px 7px no-repeat, linear-gradient(#ccd0da, #ccd0da) 0 7px / 100% 1px no-repeat; }
.zoom::-webkit-slider-thumb { appearance: none; width: 12px; height: 12px; border-radius: 50%; border: 1px solid #444; background: #f0efed; }

.marker { position: absolute; left: 152px; bottom: 34px; width: 240px; height: 94px; border: 3px solid #ed1c24; pointer-events: none; z-index: 3; }
</style>
